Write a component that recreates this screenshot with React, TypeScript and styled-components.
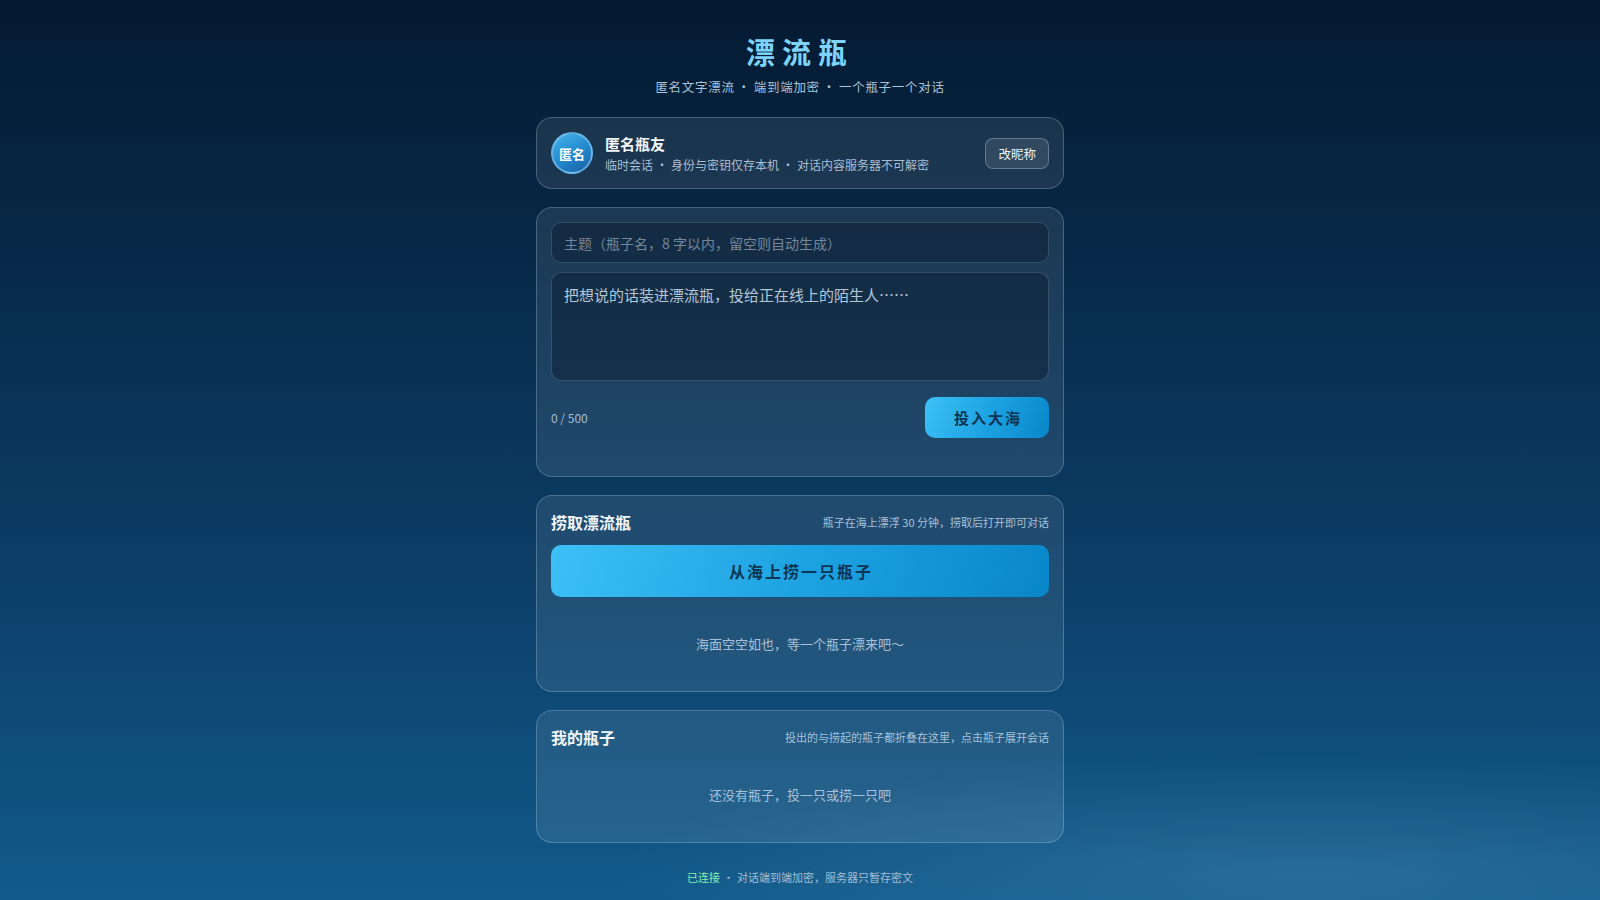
import styled, { createGlobalStyle } from "styled-components";

const GlobalStyle = createGlobalStyle`
  * { box-sizing: border-box; }
  html, body { margin: 0; padding: 0; }
  body {
    min-height: 100vh;
    font-family: "Noto Sans CJK SC", "Noto Sans", sans-serif;
    color: #e6f0f8;
    background:
      radial-gradient(ellipse 700px 120px at 82% 97%, rgba(130, 185, 225, 0.2), rgba(130, 185, 225, 0) 100%),
      linear-gradient(180deg, #041a31 0%, #072a4a 30%, #0c3f69 65%, #115b8b 100%);
    background-attachment: fixed;
  }
`;

const Page = styled.main`
  width: 528px;
  margin: 0 auto;
  padding-top: 32px;
  display: flex;
  flex-direction: column;
`;

const Header = styled.header`
  text-align: center;
  margin-bottom: 21px;
`;

const Title = styled.h1`
  margin: 0;
  font-size: 29px;
  line-height: 38px;
  font-weight: 700;
  letter-spacing: 7px;
  color: #7dd3fc;
`;

const Subtitle = styled.p`
  margin: 8px 0 0;
  font-size: 12.5px;
  line-height: 18px;
  letter-spacing: 0.7px;
  color: #a9c3da;
`;

const Dot = styled.span`
  margin: 0 3px;
`;

const Card = styled.section<{ $pb?: number }>`
  background: rgba(255, 255, 255, 0.085);
  border: 1px solid rgba(200, 225, 245, 0.26);
  border-radius: 16px;
  padding: 14px 14px ${(p) => p.$pb ?? 14}px;
  margin-bottom: 18px;
`;

const Profile = styled.div`
  display: flex;
  align-items: center;
  gap: 12px;
`;

const Avatar = styled.div`
  width: 42px;
  height: 42px;
  border-radius: 50%;
  flex-shrink: 0;
  display: flex;
  align-items: center;
  justify-content: center;
  font-size: 13px;
  font-weight: 700;
  color: #fff;
  border: 2px solid rgba(140, 205, 245, 0.6);
  background: linear-gradient(150deg, #45b4ec 0%, #2387cc 55%, #165fa3 100%);
`;

const ProfileText = styled.div`
  flex: 1;
  display: flex;
  flex-direction: column;
  gap: 1px;
`;

const Name = styled.div`
  font-size: 15px;
  line-height: 22px;
  font-weight: 700;
  color: #f3f8fc;
`;

const Meta = styled.div`
  font-size: 12px;
  line-height: 18px;
  color: #a9bfd4;
`;

const GhostButton = styled.button`
  height: 31px;
  padding: 0 12px;
  border-radius: 8px;
  border: 1px solid rgba(190, 215, 240, 0.35);
  background: rgba(255, 255, 255, 0.1);
  color: #eaf3fa;
  font-family: inherit;
  font-size: 12.5px;
`;

const Input = styled.input`
  width: 100%;
  height: 41px;
  padding: 0 12px;
  border-radius: 10px;
  border: 1px solid rgba(180, 210, 235, 0.2);
  background: rgba(10, 25, 42, 0.42);
  color: #e6f0f8;
  font-family: inherit;
  font-size: 14px;
  outline: none;
  &::placeholder { color: #72879a; }
`;

const TextArea = styled.textarea`
  display: block;
  width: 100%;
  height: 109px;
  margin-top: 9px;
  padding: 10px 12px;
  border-radius: 10px;
  border: 1px solid rgba(180, 210, 235, 0.2);
  background: rgba(10, 25, 42, 0.42);
  color: #e6f0f8;
  font-family: inherit;
  font-size: 15px;
  line-height: 24px;
  resize: none;
  outline: none;
  &::placeholder { color: #b3c6d7; }
`;

const ActionRow = styled.div`
  margin-top: 16px;
  display: flex;
  align-items: center;
  justify-content: space-between;
`;

const Counter = styled.span`
  font-size: 12px;
  color: #a8bfd4;
`;

const PrimaryButton = styled.button<{ $full?: boolean }>`
  height: ${(p) => (p.$full ? 52 : 41)}px;
  width: ${(p) => (p.$full ? "100%" : "124px")};
  border: none;
  border-radius: 10px;
  background: linear-gradient(110deg, #3cc0f6 0%, #1ea3e2 50%, #0887c9 100%);
  color: #0b3553;
  font-family: inherit;
  font-size: ${(p) => (p.$full ? 16 : 15)}px;
  font-weight: 700;
  letter-spacing: 2px;
  text-indent: 2px;
`;

const SectionHead = styled.div`
  display: flex;
  align-items: center;
  justify-content: space-between;
  height: 24px;
  margin-bottom: 11px;
`;

const SectionTitle = styled.h2`
  margin: 0;
  font-size: 16px;
  font-weight: 700;
  color: #f0f6fb;
`;

const Hint = styled.span`
  font-size: 11px;
  color: #a9c0d5;
`;

const Empty = styled.div<{ $gap?: number }>`
  margin-top: ${(p) => p.$gap ?? 0}px;
  padding: 25px 0 23px;
  text-align: center;
  font-size: 13px;
  line-height: 20px;
  color: #a9c1d6;
`;

const Footer = styled.footer`
  margin-top: 8px;
  text-align: center;
  font-size: 11px;
  line-height: 16px;
  color: #a4bdd2;
`;

const Online = styled.span`
  color: #86efac;
`;

export default function App() {
  return (
    <>
      <GlobalStyle />
      <Page>
        <Header>
          <Title>漂流瓶</Title>
          <Subtitle>
            匿名文字漂流<Dot>·</Dot>端到端加密<Dot>·</Dot>一个瓶子一个对话
          </Subtitle>
        </Header>

        <Card>
          <Profile>
            <Avatar>匿名</Avatar>
            <ProfileText>
              <Name>匿名瓶友</Name>
              <Meta>
                临时会话<Dot>·</Dot>身份与密钥仅存本机<Dot>·</Dot>对话内容服务器不可解密
              </Meta>
            </ProfileText>
            <GhostButton>改昵称</GhostButton>
          </Profile>
        </Card>

        <Card $pb={38}>
          <Input placeholder="主题（瓶子名，8 字以内，留空则自动生成）" />
          <TextArea placeholder="把想说的话装进漂流瓶，投给正在线上的陌生人……" />
          <ActionRow>
            <Counter>0 / 500</Counter>
            <PrimaryButton>投入大海</PrimaryButton>
          </ActionRow>
        </Card>

        <Card>
          <SectionHead>
            <SectionTitle>捞取漂流瓶</SectionTitle>
            <Hint>瓶子在海上漂浮 30 分钟，捞取后打开即可对话</Hint>
          </SectionHead>
          <PrimaryButton $full>从海上捞一只瓶子</PrimaryButton>
          <Empty $gap={12}>海面空空如也，等一个瓶子漂来吧～</Empty>
        </Card>

        <Card>
          <SectionHead>
            <SectionTitle>我的瓶子</SectionTitle>
            <Hint>投出的与捞起的瓶子都折叠在这里，点击瓶子展开会话</Hint>
          </SectionHead>
          <Empty>还没有瓶子，投一只或捞一只吧</Empty>
        </Card>

        <Footer>
          <Online>已连接</Online>
          <Dot>·</Dot>对话端到端加密，服务器只暂存密文
        </Footer>
      </Page>
    </>
  );
}
